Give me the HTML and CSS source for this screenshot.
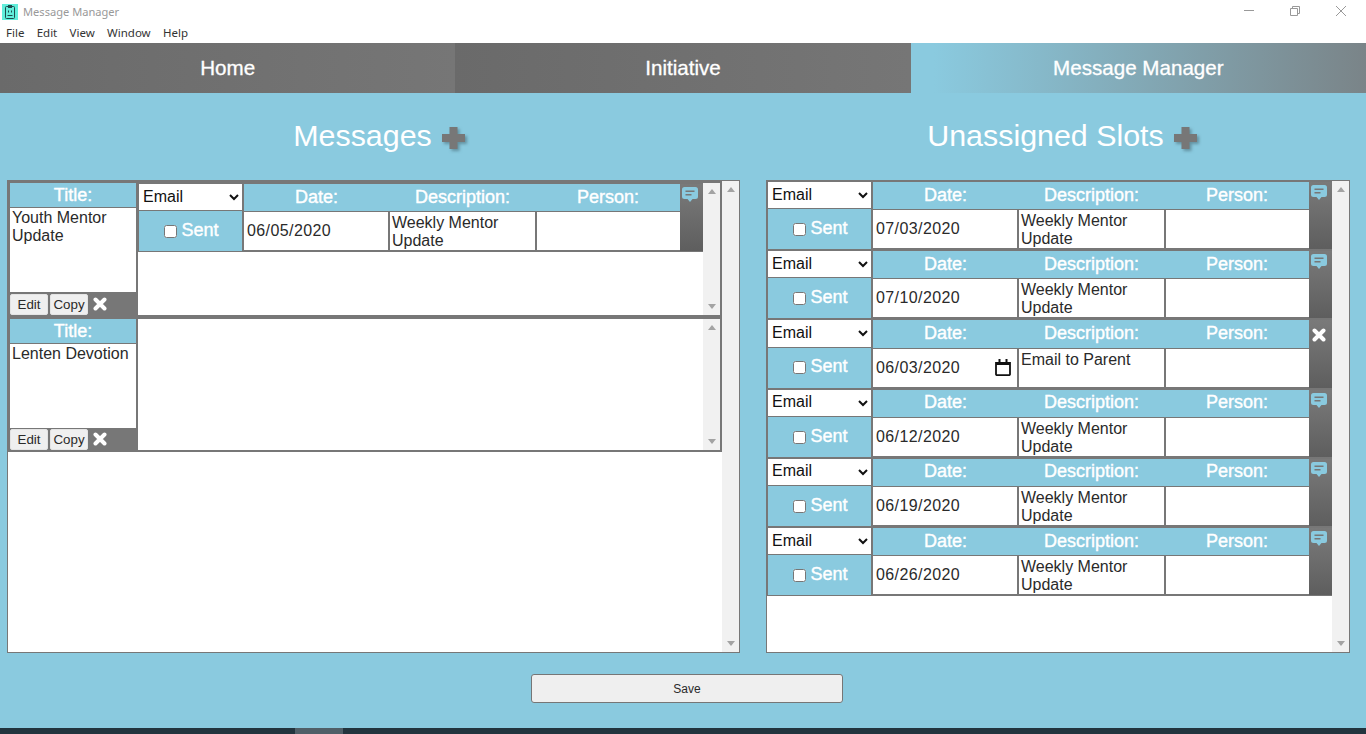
FILE: index.html
```html
<!DOCTYPE html>
<html lang="en">
<head>
    <meta charset="UTF-8">
    <title>Message Manager</title>
    <link rel="stylesheet" href="styles.css">
</head>
<body>
    <svg class="defs" width="0" height="0">
        <symbol id="icon-x" viewBox="0 0 14 14">
            <path d="M2.5 2.5L11.5 11.5M11.5 2.5L2.5 11.5" fill="none" stroke="currentColor" stroke-width="4" stroke-linecap="round"/>
        </symbol>
        <symbol id="icon-comment" viewBox="0 0 16 15">
            <path d="M2.5 0H13.5A2.5 2.5 0 0 1 16 2.500V9.500A2.500 2.500 0 0 1 13.500 12H10.500L8 15L5.500 12H2.500A2.500 2.500 0 0 1 0 9.500V2.500A2.500 2.500 0 0 1 2.500 0Z" fill="#8acadf"/>
            <path d="M3.500 3.500H12.500V5H3.500ZM3.500 7H9.500V8.500H3.500Z" fill="#777"/>
        </symbol>
    </svg>

    <div class="titlebar">
        <svg class="app-icon" width="16" height="16" viewBox="0 0 16 16">
            <rect width="16" height="16" fill="#62eedb"/>
            <rect x="3.500" y="2.500" width="9" height="12" rx="1" fill="none" stroke="#1f4a4c"/>
            <rect x="6" y="1" width="4" height="3" fill="#1f4a4c"/>
            <path d="M6.500 6.500V8.500M9.500 6.500V8.500M5.500 11.500H10.500" stroke="#1f4a4c" fill="none"/>
        </svg>
        <span class="app-title">Message Manager</span>
        <div class="win-controls">
            <svg width="12" height="12" viewBox="0 0 12 12"><path d="M1 5.500H11" stroke="#999" fill="none"/></svg>
            <svg width="12" height="12" viewBox="0 0 12 12"><path d="M1.500 3.500H8.500V10.500H1.500ZM3.500 3.500V1.500H10.500V8.500H8.500" stroke="#999" fill="none"/></svg>
            <svg width="12" height="12" viewBox="0 0 12 12"><path d="M1 1L11 11M11 1L1 11" stroke="#999" fill="none"/></svg>
        </div>
    </div>
    <div class="menubar">
        <span>File</span>
        <span>Edit</span>
        <span>View</span>
        <span>Window</span>
        <span>Help</span>
    </div>

    <nav class="tabs">
        <a class="tab">Home</a>
        <a class="tab">Initiative</a>
        <a class="tab active">Message Manager</a>
    </nav>

    <main class="content">
        <div class="columns">
            <section class="column column-left">
                <h2 class="heading">Messages <svg class="plus" width="23" height="22" viewBox="0 0 23 22"><path d="M7.500 0H15.500V7H23V15H15.500V22H7.500V15H0V7H7.500Z" fill="#777"/></svg></h2>
                <div class="panel">
                    <div class="list">
                        <div class="message">
                            <div class="message-left">
                                <div class="title-label">Title:</div>
                                <div class="title-text">Youth Mentor Update</div>
                                <div class="message-actions">
                                    <button class="small-btn">Edit</button>
                                    <button class="small-btn">Copy</button>
                                    <svg class="x-icon" width="14" height="14"><use href="#icon-x"/></svg>
                                </div>
                            </div>
                            <div class="message-slots">
                                <div class="slot-area">
                                    <div class="slot">
                                        <div class="slot-left">
                                            <select class="type-select"><option>Email</option></select>
                                            <label class="sent"><input type="checkbox">Sent</label>
                                        </div>
                                        <div class="slot-main">
                                            <div class="slot-head"><span>Date:</span><span>Description:</span><span>Person:</span></div>
                                            <div class="slot-cells">
                                                <div class="cell cell-date">06/05/2020</div>
                                                <div class="cell">Weekly Mentor Update</div>
                                                <div class="cell"></div>
                                            </div>
                                        </div>
                                        <div class="slot-side"><svg class="comment-icon" width="16" height="15"><use href="#icon-comment"/></svg></div>
                                    </div>
                                </div>
                                <div class="scrollbar"><i class="up"></i><i class="down"></i></div>
                            </div>
                        </div>
                        <div class="message message-short">
                            <div class="message-left">
                                <div class="title-label">Title:</div>
                                <div class="title-text">Lenten Devotion</div>
                                <div class="message-actions">
                                    <button class="small-btn">Edit</button>
                                    <button class="small-btn">Copy</button>
                                    <svg class="x-icon" width="14" height="14"><use href="#icon-x"/></svg>
                                </div>
                            </div>
                            <div class="message-slots">
                                <div class="slot-area"></div>
                                <div class="scrollbar"><i class="up"></i><i class="down"></i></div>
                            </div>
                        </div>
                    </div>
                    <div class="scrollbar"><i class="up"></i><i class="down"></i></div>
                </div>
            </section>

            <section class="column column-right">
                <h2 class="heading">Unassigned Slots <svg class="plus" width="23" height="22" viewBox="0 0 23 22"><path d="M7.500 0H15.500V7H23V15H15.500V22H7.500V15H0V7H7.500Z" fill="#777"/></svg></h2>
                <div class="panel">
                    <div class="list list-slots">
                        <div class="slot">
                            <div class="slot-left">
                                <select class="type-select"><option>Email</option></select>
                                <label class="sent"><input type="checkbox">Sent</label>
                            </div>
                            <div class="slot-main">
                                <div class="slot-head"><span>Date:</span><span>Description:</span><span>Person:</span></div>
                                <div class="slot-cells">
                                    <div class="cell cell-date">07/03/2020</div>
                                    <div class="cell">Weekly Mentor Update</div>
                                    <div class="cell"></div>
                                </div>
                            </div>
                            <div class="slot-side"><svg class="comment-icon" width="16" height="15"><use href="#icon-comment"/></svg></div>
                        </div>
                        <div class="slot">
                            <div class="slot-left">
                                <select class="type-select"><option>Email</option></select>
                                <label class="sent"><input type="checkbox">Sent</label>
                            </div>
                            <div class="slot-main">
                                <div class="slot-head"><span>Date:</span><span>Description:</span><span>Person:</span></div>
                                <div class="slot-cells">
                                    <div class="cell cell-date">07/10/2020</div>
                                    <div class="cell">Weekly Mentor Update</div>
                                    <div class="cell"></div>
                                </div>
                            </div>
                            <div class="slot-side"><svg class="comment-icon" width="16" height="15"><use href="#icon-comment"/></svg></div>
                        </div>
                        <div class="slot">
                            <div class="slot-left">
                                <select class="type-select"><option>Email</option></select>
                                <label class="sent"><input type="checkbox">Sent</label>
                            </div>
                            <div class="slot-main">
                                <div class="slot-head"><span>Date:</span><span>Description:</span><span>Person:</span></div>
                                <div class="slot-cells">
                                    <div class="cell cell-date">06/03/2020
                                        <svg class="calendar" width="16" height="17" viewBox="0 0 16 17"><path d="M1 3.800H15V15.200A1 1 0 0 1 14 16.200H2A1 1 0 0 1 1 15.200Z" fill="none" stroke="#111" stroke-width="1.800"/><path d="M1 3H15V6H1ZM3.500 0H5.500V3H3.500ZM10.500 0H12.500V3H10.500Z" fill="#111"/></svg>
                                    </div>
                                    <div class="cell">Email to Parent</div>
                                    <div class="cell"></div>
                                </div>
                            </div>
                            <div class="slot-side"><svg class="x-icon side-x" width="14" height="14"><use href="#icon-x"/></svg></div>
                        </div>
                        <div class="slot">
                            <div class="slot-left">
                                <select class="type-select"><option>Email</option></select>
                                <label class="sent"><input type="checkbox">Sent</label>
                            </div>
                            <div class="slot-main">
                                <div class="slot-head"><span>Date:</span><span>Description:</span><span>Person:</span></div>
                                <div class="slot-cells">
                                    <div class="cell cell-date">06/12/2020</div>
                                    <div class="cell">Weekly Mentor Update</div>
                                    <div class="cell"></div>
                                </div>
                            </div>
                            <div class="slot-side"><svg class="comment-icon" width="16" height="15"><use href="#icon-comment"/></svg></div>
                        </div>
                        <div class="slot">
                            <div class="slot-left">
                                <select class="type-select"><option>Email</option></select>
                                <label class="sent"><input type="checkbox">Sent</label>
                            </div>
                            <div class="slot-main">
                                <div class="slot-head"><span>Date:</span><span>Description:</span><span>Person:</span></div>
                                <div class="slot-cells">
                                    <div class="cell cell-date">06/19/2020</div>
                                    <div class="cell">Weekly Mentor Update</div>
                                    <div class="cell"></div>
                                </div>
                            </div>
                            <div class="slot-side"><svg class="comment-icon" width="16" height="15"><use href="#icon-comment"/></svg></div>
                        </div>
                        <div class="slot">
                            <div class="slot-left">
                                <select class="type-select"><option>Email</option></select>
                                <label class="sent"><input type="checkbox">Sent</label>
                            </div>
                            <div class="slot-main">
                                <div class="slot-head"><span>Date:</span><span>Description:</span><span>Person:</span></div>
                                <div class="slot-cells">
                                    <div class="cell cell-date">06/26/2020</div>
                                    <div class="cell">Weekly Mentor Update</div>
                                    <div class="cell"></div>
                                </div>
                            </div>
                            <div class="slot-side"><svg class="comment-icon" width="16" height="15"><use href="#icon-comment"/></svg></div>
                        </div>
                    </div>
                    <div class="scrollbar"><i class="up"></i><i class="down"></i></div>
                </div>
            </section>
        </div>
        <button class="save-btn">Save</button>
    </main>

    <div class="taskbar"><div class="taskbar-item"></div></div>
</body>
</html>
```

FILE: styles.css
```css
* {
    box-sizing: border-box;
}
body {
    font-family: "Liberation Sans", Arial, sans-serif;
    margin: 0;
    height: 734px;
    overflow: hidden;
    display: flex;
    flex-direction: column;
    background: #fff;
    color: #2a2a2a;
}
.defs {
    position: absolute;
}

/* window chrome */
.titlebar {
    height: 22px;
    flex: none;
    display: flex;
    align-items: center;
    padding: 2px 0 0 2px;
}
.app-title {
    margin-left: 5px;
    margin-top: -2px;
    font-family: "Noto Sans", sans-serif;
    font-size: 11.1px;
    color: #999;
}
.win-controls {
    margin-left: auto;
    margin-right: 19px;
    margin-top: -2px;
    display: flex;
    gap: 34px;
}
.menubar {
    height: 21px;
    flex: none;
    display: flex;
    align-items: center;
    gap: 12.3px;
    padding-left: 6px;
    font-family: "Noto Sans", sans-serif;
    font-size: 11.5px;
    color: #333;
}

/* tabs */
.tabs {
    height: 50px;
    flex: none;
    display: grid;
    grid-template-columns: repeat(3, 1fr);
}
.tab {
    display: flex;
    align-items: center;
    justify-content: center;
    font-size: 20.6px;
    color: #fff;
    -webkit-text-stroke: 0.3px #fff;
    background: linear-gradient(to right, #6a6a6a, #767676);
}
.tab.active {
    background: linear-gradient(to right, #8acadf 0%, #8acadf 5%, #7a8488 100%);
}

/* main area */
.content {
    flex: 1;
    background: #8acadf;
    padding: 0 16px 0 7px;
}
.columns {
    display: flex;
    gap: 26px;
}
.column-left {
    width: 733px;
}
.column-right {
    width: 584px;
}
.heading {
    height: 87px;
    margin: 0;
    padding-bottom: 2px;
    display: flex;
    align-items: center;
    justify-content: center;
    gap: 10px;
    font-size: 30.4px;
    font-weight: normal;
    color: #fff;
}
.column-left .heading {
    padding-left: 11px;
}
.column-right .heading {
    padding-left: 8px;
}
.plus {
    filter: drop-shadow(2px 2px 1.5px rgba(60, 90, 100, 0.5));
    margin-top: 4px;
}
.panel {
    height: 473px;
    display: flex;
    background: #fff;
    border: 1px solid #777;
}
.list {
    flex: 1;
}
.scrollbar {
    width: 17px;
    flex: none;
    background: #f1f1f1;
    display: flex;
    flex-direction: column;
    justify-content: space-between;
    align-items: center;
    padding: 6px 0;
}
.scrollbar i {
    width: 0;
    height: 0;
    border-left: 4px solid transparent;
    border-right: 4px solid transparent;
}
.scrollbar .up {
    border-bottom: 5px solid #a3a3a3;
}
.scrollbar .down {
    border-top: 5px solid #a3a3a3;
}

/* messages on the left */
.message {
    height: 136px;
    display: flex;
    border: 2px solid #777;
}
.message-short {
    height: 135px;
}
.message-left {
    width: 128px;
    flex: none;
    display: flex;
    flex-direction: column;
    background: #777;
    border-right: 2px solid #777;
}
.title-label {
    height: 24px;
    flex: none;
    background: #8acadf;
    color: #fff;
    font-size: 18px;
    -webkit-text-stroke: 0.4px #fff;
    text-align: center;
    line-height: 25px;
}
.title-text {
    flex: 1;
    margin-top: 1px;
    background: #fff;
    font-size: 16px;
    line-height: 18px;
    padding: 1px 2px 0;
}
.message-actions {
    height: 23px;
    flex: none;
    display: flex;
    align-items: flex-end;
    gap: 2px;
}
.message-short .message-actions {
    height: 22px;
}
.small-btn {
    width: 38px;
    height: 21px;
    padding: 0;
    border: 1px solid #e4e4e4;
    border-radius: 2px;
    background: #efefef;
    color: #2a2a2a;
    font-family: "Liberation Sans", Arial, sans-serif;
    font-size: 13.33px;
}
.x-icon {
    color: #fff;
    margin: 0 0 4px 3px;
}
.message-slots {
    flex: 1;
    display: flex;
    background: #fff;
}
.slot-area {
    flex: 1;
}

/* slot rows */
.slot {
    height: 69.2px;
    width: 565px;
    display: flex;
    background: #777;
    border-top: 1px solid #777;
    border-bottom: 1px solid #777;
    border-left: 1px solid #777;
}
.slot-left {
    width: 103px;
    flex: none;
    margin-right: 2px;
    display: flex;
    flex-direction: column;
    gap: 1px;
}
.type-select {
    height: 26.2px;
    flex: none;
    border: none;
    border-radius: 0;
    background: #fff;
    color: #111;
    font-family: "Liberation Sans", Arial, sans-serif;
    font-size: 16px;
    padding: 0 0 2px;
}
.sent {
    flex: 1;
    display: flex;
    align-items: center;
    justify-content: center;
    padding: 0 0 1.5px 2px;
    background: #8acadf;
    color: #fff;
    font-size: 18px;
    -webkit-text-stroke: 0.4px #fff;
}
.sent input {
    margin: 2px 4px 0 0;
}
.slot-main {
    width: 436px;
    flex: none;
}
.slot-head {
    height: 27.2px;
    padding-bottom: 1px;
    display: grid;
    grid-template-columns: 145px 147px 144px;
    align-items: center;
    background: #8acadf;
    color: #fff;
    font-size: 18px;
    -webkit-text-stroke: 0.4px #fff;
    text-align: center;
}
.slot-cells {
    height: 38px;
    margin-top: 1px;
    display: grid;
    grid-template-columns: 144px 145px 143px;
    gap: 2px;
}
.cell {
    background: #fff;
    font-size: 16px;
    line-height: 18px;
    padding: 2px 2px 0;
    overflow: hidden;
}
.cell-date {
    display: flex;
    align-items: center;
    justify-content: space-between;
    padding: 0 6px 0 3px;
    letter-spacing: 0.4px;
}
.slot-side {
    flex: 1;
    background: linear-gradient(#7a7a7a, #5e5e5e);
    padding: 3px 0 0 2px;
}
.comment-icon {
    display: block;
}
.side-x {
    display: block;
    margin: 5px 0 0 1px;
}

/* bottom */
.save-btn {
    display: block;
    width: 312px;
    height: 29px;
    margin: 21px 0 0 524px;
    border: 1px solid #767676;
    border-radius: 3px;
    background: #efefef;
    color: #2a2a2a;
    font-family: "Liberation Sans", Arial, sans-serif;
    font-size: 12px;
}
.taskbar {
    height: 6px;
    flex: none;
    background: #22343e;
    padding-left: 295px;
}
.taskbar-item {
    width: 48px;
    height: 6px;
    background: #505f68;
}
```
